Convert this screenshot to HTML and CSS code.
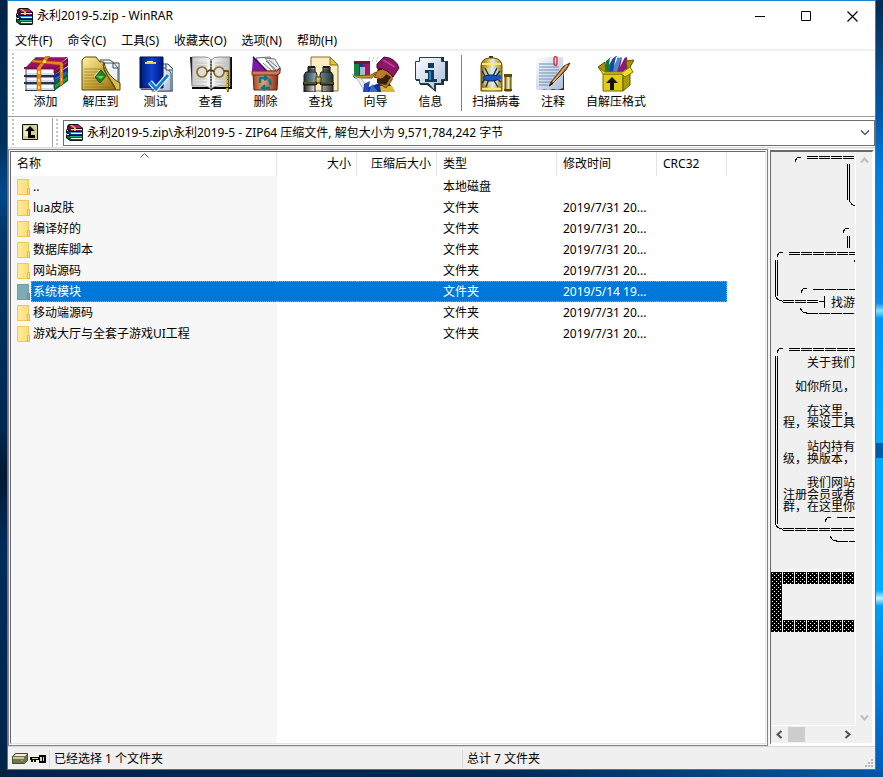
FILE: index.html
```html
<!DOCTYPE html>
<html lang="zh-CN">
<head>
<meta charset="utf-8">
<title>永利2019-5.zip - WinRAR</title>
<link rel="stylesheet" href="styles.css">
</head>
<body>
<svg class="defs" aria-hidden="true">
  <defs>
    <linearGradient id="gold" x1="0" y1="0" x2="1" y2="1"><stop offset="0" stop-color="#fff4a8"/><stop offset=".5" stop-color="#d2b246"/><stop offset="1" stop-color="#8a6a10"/></linearGradient>
    <linearGradient id="goldbar" x1="0" x2="1"><stop offset="0" stop-color="#8a6a00"/><stop offset=".35" stop-color="#e0c050"/><stop offset=".55" stop-color="#d8f0f0"/><stop offset="1" stop-color="#a88400"/></linearGradient>
    <linearGradient id="blue" x1="0" x2="1"><stop offset="0" stop-color="#001a78"/><stop offset=".5" stop-color="#0c44cc"/><stop offset="1" stop-color="#001888"/></linearGradient>
    <linearGradient id="paper" x1="0" y1="0" x2="1" y2="1"><stop offset="0" stop-color="#ffffff"/><stop offset="1" stop-color="#a8bcd8"/></linearGradient>
    <linearGradient id="page" x1="0" x2="1"><stop offset="0" stop-color="#c8c8c8"/><stop offset=".5" stop-color="#f8f8f8"/><stop offset="1" stop-color="#bdbdbd"/></linearGradient>
    <linearGradient id="bin" x1="0" x2="1"><stop offset="0" stop-color="#a84420"/><stop offset=".4" stop-color="#e8a080"/><stop offset="1" stop-color="#8c2c10"/></linearGradient>
    <linearGradient id="tube" x1="0" x2="1"><stop offset="0" stop-color="#203438"/><stop offset=".4" stop-color="#88a4a8"/><stop offset="1" stop-color="#203438"/></linearGradient>
    <linearGradient id="steel" x1="0" x2="1"><stop offset="0" stop-color="#222"/><stop offset=".4" stop-color="#eee"/><stop offset="1" stop-color="#333"/></linearGradient>
    <linearGradient id="folder" x1="0" x2="1"><stop offset="0" stop-color="#ffeb9c"/><stop offset="1" stop-color="#fbdc74"/></linearGradient>
    <pattern id="shade" width="4" height="4" patternUnits="userSpaceOnUse"><path fill="#000" d="M0 0h4v4H0z"/><path fill="#fff" d="M1 1h1v1H1zM3 3h1v1H3z"/></pattern>
    <symbol id="books" viewBox="0 0 17 17">
      <path fill="#111" d="M1 2l2-2h9l5 4v12l-1 1H4l-4-3v-3l1-1-1-1V6l1-1z"/>
      <path fill="#b0207c" d="M3 1h9l4 3H5z"/><path fill="#7c0a50" d="M2 2l3 3h11v2H5L1 4z"/><path fill="#f4f4f4" d="M5 5h11v1H5z"/><path fill="#f0c818" d="M4 1h2l4 3v3H8V4z"/>
      <path fill="#0a3080" d="M1 7l4 1h11v3H5L1 9z"/><path fill="#3c8ce0" d="M4 8h12v1H4z"/><path fill="#f4f4f4" d="M5 9h11v1H5z"/>
      <path fill="#06603a" d="M1 11l4 2h11v3H5l-4-2z"/><path fill="#20b870" d="M4 12h12v1H4z"/><path fill="#f4f4f4" d="M5 14h11v1H5zM1 6h1v1H1zM1 10h2v1H1z"/>
    </symbol>
    <symbol id="dir" viewBox="0 0 13 16"><path fill="url(#folder)" stroke="#eec94f" d="M.5.5h11v9h1v6H.5z"/><path fill="#ffe28a" stroke="#e2b93c" d="M10.500 9.500h2v6h-2z"/></symbol>
  </defs>
</svg>
<main class="window">
  <header class="titlebar">
    <svg class="app-icon"><use href="#books"/></svg>
    <h1>永利2019-5.zip - WinRAR</h1>
    <button class="caption" aria-label="最小化"><svg width="11" height="11"><path d="M0 5.500h10" stroke="#000"/></svg></button>
    <button class="caption" aria-label="最大化"><svg width="11" height="11"><path d="M.5.5h9v9h-9z" fill="none" stroke="#000"/></svg></button>
    <button class="caption" aria-label="关闭"><svg width="11" height="11"><path d="M.5.5l10 10m0-10l-10 10" stroke="#000" stroke-width="1.200"/></svg></button>
  </header>
  <nav class="menu">
    <button>文件(F)</button><button>命令(C)</button><button>工具(S)</button><button>收藏夹(O)</button><button>选项(N)</button><button>帮助(H)</button>
  </nav>
  <div class="toolbar">
    <span class="grip"></span>
    <button class="tool"><svg width="44" height="36" viewBox="0 0 44 36">
      <path fill="#063" d="M30 26l14-9v8L30 35z"/><path fill="#18a050" d="M31 29l12-8v3l-12 8z"/><path fill="#0a2c90" d="M30 19l14-8v6l-14 9z"/><path fill="#2468d8" d="M31 22l12-7v2l-12 7z"/><path fill="#700848" d="M30 12L44 2v8l-14 9z"/><path fill="#b43088" d="M31 14L43 5v2l-12 8z"/>
      <path fill="#981068" d="M12 1h32L31 12H1z"/><path fill="#c83898" d="M13 1h29l-2 1H11z"/>
      <path fill="#fff" stroke="#445" d="M2 13h28v6H2zM2 21h28v5H2zM2 28h28v6H2z"/><path fill="#d4dce8" d="M3 17h27v2H3zM3 24h27v2H3zM3 32h27v2H3z"/>
      <path fill="#801050" d="M0 11h31v2H0z"/><path fill="#222c60" d="M0 19h31v2H0z"/><path fill="#203850" d="M0 26h31v2H0zM1 34h30v1H1z"/>
      <path fill="#e88820" stroke="#a85808" stroke-width=".5" d="M22 0h4l-9 12v23h-4V12zM9 4l29 2 1 2v20l-3 2V9L7 6z"/><path fill="#ffe04a" d="M19 4h3v3h-3zM14 15h2v3h-2zM14 23h2v3h-2zM14 30h2v3h-2zM37 13h1v3h-1zM37 22h1v3h-1z"/>
    </svg>添加</button>
    <button class="tool"><svg width="40" height="36" viewBox="0 0 40 36">
      <path fill="#fff" stroke="#345" d="M19 4h10l4 3h5v20H19z"/><path fill="#eef4fa" stroke="#456" d="M23 7h10l4 5v17H23z"/><path fill="none" stroke="#345" d="M32 7v5h5"/>
      <path fill="url(#gold)" stroke="#5c4400" d="M1 8V4l3-3h11l4 5h4v8l12 20H1z"/><path fill="#dcbc50" stroke="#503c00" d="M23 7c3 11 9 16 16 20v7h-4C32 25 26 22 22 9z"/>
      <path stroke="#927418" opacity=".7" d="M3 13h19M3 16h17M3 19h14M3 22h12M3 25h14M3 28h20M3 31h27"/><path fill="#e9f7dd" d="M19 14v12l-6-6z"/><path fill="#228624" stroke="#145014" d="M20 14l5 6-6 7-5-6z"/><path fill="#70cb58" d="M15 20h8l-3 3z"/>
    </svg>解压到</button>
    <button class="tool"><svg width="34" height="36" viewBox="0 0 34 36">
      <path fill="url(#paper)" stroke="#345" d="M23 8h6l5 5v22H15V8z"/><path fill="url(#paper)" stroke="#456" d="M20 12h8l4 5v18H13V12z"/><path fill="#fff" stroke="#345" d="M27 8v6h6"/><path fill="url(#blue)" stroke="#00104c" d="M1 1h23v31H1z"/><path fill="#00145c" d="M1 1h2v31H1z"/><path fill="#e4cf42" d="M6 6h11v2H6z"/><path fill="#fff3a0" d="M8 5h6v1H8z"/><path fill="none" stroke="#fff" stroke-width="5" d="M11 26l6 7 12-14"/><path fill="none" stroke="#0880dc" stroke-width="3" d="M11 26l6 7 12-14"/><path fill="#2060a8" d="M2 33h13v1H2z"/>
    </svg>测试</button>
    <button class="tool"><svg width="42" height="36" viewBox="0 0 42 36">
      <path fill="#080808" d="M0 1h2v32h18l1 2 2-2h19V1h-2v30H2z"/><path fill="url(#page)" stroke="#666" stroke-width=".7" d="M2 1h13q4 0 6 3v29q-3-3-7-3H2zM21 4q3-3 7-3h12v29H28q-4 0-7 3z"/><path stroke="#222" stroke-dasharray="2 1" d="M21 5v27"/>
      <g stroke="#bbb" stroke-width=".8"><path d="M5 7h12M5 10h12M5 23h12M5 26h12M25 7h12M25 10h12M25 23h12M25 26h12"/></g><circle cx="12" cy="16" r="5" fill="#ddd" stroke="#8b6b22" stroke-width="1.700"/><circle cx="29" cy="16" r="5" fill="#ddd" stroke="#8b6b22" stroke-width="1.700"/><path fill="none" stroke="#44300a" stroke-width="1.500" d="M17 16q4-4 7 0M34 15h4v21"/><path stroke="#d7af2a" stroke-width="2" d="M37 16v18" stroke-dasharray="3 1"/>
    </svg>查看</button>
    <button class="tool"><svg width="30" height="36" viewBox="0 0 30 36">
      <path fill="#fff" stroke="#666" d="M5 2l14-1 10 10v4H12z"/><path fill="#e7e7ef" stroke="#777" d="M14 2l10 1 5 9-5 3z"/><path stroke="#777" d="M15 5l10 9M18 4l8 7M12 7l9 8"/><path fill="#7a18aa" d="M2 0l14 15H1z"/><path stroke="#40085c" stroke-width="1.500" d="M2 1l14 14"/><path fill="url(#bin)" stroke="#602010" d="M2 18h25l-1 16H3z"/><path fill="#ce7d58" stroke="#742a10" d="M1 15h25l3-3v5l-3 2H1z"/><path fill="none" stroke="#087888" stroke-width="2.400" d="M9 27v-5h6m-2-3 3 3-3 2m5-1 2 6m-1 3h-7m2-3-3 3 3 2"/>
    </svg>删除</button>
    <button class="tool"><svg width="36" height="36" viewBox="0 0 36 36">
      <path fill="#faedc0" stroke="#7e6d3c" d="M8 1h19l8 8v26H8z"/><path fill="#e7c631" stroke="#7e6d20" d="M27 1v8h8z"/><path fill="url(#steel)" stroke="#111" d="M5 11h7v7H5zM20 11h7v7h-7z"/><path stroke="#222" d="M5 14h7M20 14h7"/><path fill="#151e20" d="M5 10h7v2H5zM20 10h7v2h-7z"/><path fill="url(#tube)" stroke="#101a1c" d="M3 16h10l1 3v9H1v-9zM18 16h10l2 3v9H17v-9z"/><path fill="url(#gold)" stroke="#443000" d="M13 21h5v6h-5z"/><path fill="url(#steel)" stroke="#111" d="M1 29h11v7H1zM19 29h11v7H19z"/><path fill="#151c1c" d="M0 26h14v3H0zM17 26h14v3H17z"/><path stroke="#9f8728" d="M1 27h12M18 27h12"/>
    </svg>查找</button>
    <button class="tool"><svg width="48" height="36" viewBox="0 0 48 36">
      <path fill="#142d9c" d="M17 31l13-5 8 2 5 8H11z"/><path fill="#4268cc" d="M17 36l3-8 6 8z"/><path fill="#d8b82c" d="M28 30h12l3 6H29z"/><path fill="#bd782a" stroke="#6e3d0d" d="M26 9l15 6-1 9-6 8-9-6 3-3-6-2 4-7z"/><path fill="#38210b" d="M25 23q7 0 9-5l5 3-5 8-9-2z"/><path fill="#8c1865" stroke="#430b33" d="M25 8l7-7q12 1 15 11l-6 9q-5-8-16-9z"/><path stroke="#bd3b92" stroke-width="2" d="M31 4l12 7"/><path stroke="#321" stroke-width="1.500" d="M26 14l4-1"/>
      <path fill="#148344" d="M2 5h6v15H2z"/><path fill="#0d3c98" d="M7 5h4v16H7z"/><path fill="#a01768" d="M11 5h7v16h-7z"/><path fill="#6f143b" d="M2 5h16v3H2z"/><path fill="#dff0f0" d="M8 11h5v10H8z" opacity=".7"/><path fill="#c99b2b" stroke="#7b5210" d="M1 20l18-1 5-3-4 6H3z"/><path fill="#e9eef4" stroke="#8794a4" stroke-width=".6" d="M0 18q5 5 9 4l7 10-4 3-6-11z"/><path fill="#2348b4" d="M12 28l6-3-2 11h-5z"/><path stroke="#a0a0a0" stroke-dasharray="1 3" d="M17 2h10M20 5h6"/>
    </svg>向导</button>
    <button class="tool"><svg width="34" height="36" viewBox="0 0 34 36">
      <path fill="#18333c" d="M7 1h23v4h4v20h-4v4H22v7l-9-7H6v-4H2V5h5z"/><path fill="url(#paper)" stroke="#263c46" d="M5.500 1.500h22v4h4v18h-4v4h-7v7l-6-7h-9v-4h-4v-18h4z"/><path fill="#123b58" d="M14 7h6v5h-6zM11 14h9v9h3v3H11v-3h3v-6h-3z"/><path fill="#1d88bd" d="M15 15h2v9h-2z"/>
    </svg>信息</button>
    <span class="tool-sep"></span>
    <button class="tool scan"><svg width="32" height="36" viewBox="0 0 32 36">
      <path fill="#443600" d="M9 0h4v4H9z"/><path fill="url(#goldbar)" stroke="#664e00" d="M1 10q0-7 8-8h5q8 1 8 8v25H1z"/><path fill="#ffe774" d="M2 7h19v2H2zM2 32h19v2H2z"/><path fill="#cce8e8" d="M4 12h14v17H4z" opacity=".5"/><path fill="none" stroke="#10226a" stroke-width="1.300" d="M5 20l-3-5m7 5-4-8m8 8 4-8m-1 8 4-5M5 23l-3 4m7-4-3 8m7-8 5 8m-2-9 5 4"/><ellipse cx="11" cy="22" rx="8" ry="3" fill="#1854bd" stroke="#0b2159"/><circle cx="19" cy="21" r="2.500" fill="#1854bd"/><path fill="url(#goldbar)" stroke="#564200" d="M25 20h6v15h-6z"/><path fill="#604800" d="M24 18h8v3h-8zM24 33h8v2h-8z"/>
    </svg>扫描病毒</button>
    <button class="tool note"><svg width="36" height="36" viewBox="0 0 36 36">
      <path fill="#222e3b" d="M4 34h25V12l-2 19z"/><path fill="url(#paper)" d="M1 1h27v31q-5 3-10 1-5 2-9 0-5 2-8 0z"/><path stroke="#6d8cb5" d="M4 8h18M4 11h20M4 14h20M4 17h18M4 20h16M4 23h13M4 26h12M4 29h9"/><path fill="none" stroke="#d33c48" stroke-width="1.500" d="M19 2v6q2 3 3 0V2q-2-3-3 0"/><path fill="#9c6024" stroke="#5b3010" d="M35 7l-4 7-15 15-2 1 2-4L29 10z"/><path stroke="#ddb36a" stroke-width="1.500" d="M32 9L18 26"/><path fill="#111" d="M14 30l3-4 1 2z"/>
    </svg>注释</button>
    <button class="tool sfx"><svg width="36" height="36" viewBox="0 0 36 36">
      <path fill="#147847" d="M8 5l5-4 3 2-3 14H7z"/><path fill="#1e44a6" d="M13 4l5-4 3 2-5 16h-5z"/><path fill="#4a8ad0" d="M17 4l6-3 2 2-6 14h-4z"/><path fill="#8c1878" d="M23 3l6-2 1 11-7 5-4-1z"/><path fill="#fff" d="M12 2l2-1 1 1-4 7zM18 1l2 0-4 9zM24 2l3-1-5 10z"/><path fill="#a89000" stroke="#5f5200" d="M0 11l7-5 1 10-2 2zM29 12l-1-7 8-1-5 9z"/><path fill="#dfcf12" stroke="#786b00" d="M5 18h20v17H5z"/><path fill="#aa9c08" stroke="#625800" d="M25 18l7-6v17l-7 6z"/><path fill="#efdf22" stroke="#807200" d="M1 12l6 4h18l7-5 3 5-8 5-3-3H5z"/><path fill="#161200" d="M14 21l6 6h-4v7h-4v-7H8z"/>
    </svg>自解压格式</button>
  </div>
  <div class="address">
    <span class="grip"></span>
    <button class="up" aria-label="上一级"><svg width="16" height="16"><path fill="#d4cd96" stroke="#111" d="M.5.5h15v15H.5z"/><path fill="#eee9bd" d="M2 2h6v10H2z"/><path fill="#000" d="M8 2l5 5H9v4h4v3H6V7H3z"/></svg></button>
    <span class="grip second"></span>
    <div class="combo">
      <svg class="app-icon"><use href="#books"/></svg>
      <select aria-label="路径"><option>永利2019-5.zip\永利2019-5 - ZIP64 压缩文件, 解包大小为 9,571,784,242 字节</option></select>
      <svg class="chevron" width="10" height="6"><path d="M1 .5l4 4 4-4" fill="none" stroke="#444" stroke-width="1.200"/></svg>
    </div>
  </div>
  <div class="panes">
    <section class="pane list"><div class="inner">
      <svg class="sort" width="9" height="5"><path d="M.5 4.500l4-4 4 4" fill="none" stroke="#555"/></svg>
      <table>
        <colgroup><col class="c-name"><col class="c-size"><col class="c-size"><col class="c-type"><col class="c-date"><col class="c-crc"></colgroup>
        <thead><tr><th>名称</th><th class="num">大小</th><th class="num">压缩后大小</th><th>类型</th><th>修改时间</th><th>CRC32</th></tr></thead>
        <tbody>
          <tr><td><div class="name"><svg><use href="#dir"/></svg><span>..</span></div></td><td></td><td></td><td>本地磁盘</td><td></td><td></td></tr>
          <tr><td><div class="name"><svg><use href="#dir"/></svg><span>lua皮肤</span></div></td><td></td><td></td><td>文件夹</td><td>2019/7/31 20...</td><td></td></tr>
          <tr><td><div class="name"><svg><use href="#dir"/></svg><span>编译好的</span></div></td><td></td><td></td><td>文件夹</td><td>2019/7/31 20...</td><td></td></tr>
          <tr><td><div class="name"><svg><use href="#dir"/></svg><span>数据库脚本</span></div></td><td></td><td></td><td>文件夹</td><td>2019/7/31 20...</td><td></td></tr>
          <tr><td><div class="name"><svg><use href="#dir"/></svg><span>网站源码</span></div></td><td></td><td></td><td>文件夹</td><td>2019/7/31 20...</td><td></td></tr>
          <tr class="selected"><td><div class="name"><svg viewBox="0 0 13 16"><path fill="#7eabb5" stroke="#6fa09a" d="M.5.5h11v9h1v6H.5z"/><path fill="#7eabb5" stroke="#639488" d="M10.500 9.500h2v6h-2z"/></svg><span>系统模块</span></div></td><td></td><td></td><td>文件夹</td><td>2019/5/14 19...</td><td></td></tr>
          <tr><td><div class="name"><svg><use href="#dir"/></svg><span>移动端源码</span></div></td><td></td><td></td><td>文件夹</td><td>2019/7/31 20...</td><td></td></tr>
          <tr><td><div class="name"><svg><use href="#dir"/></svg><span>游戏大厅与全套子游戏UI工程</span></div></td><td></td><td></td><td>文件夹</td><td>2019/7/31 20...</td><td></td></tr>
        </tbody>
      </table>
    </div></section>
    <section class="pane comment"><div class="inner">
      <div class="text">
        <svg class="art" width="84" height="500" fill="none" stroke="#000" shape-rendering="crispEdges">
          <g stroke-dasharray="11 1">
            <path d="M36 4.500h48M36 6.500h48M18 100.500h66M18 102.500h66M12 148.500h36M12 150.500h36M42 137.500h42M36 161.500h48M18 196.500h66M18 198.500h66M12 376.500h72M12 378.500h72M66 365.500h18M66 389.500h18"/>
          </g>
          <path d="M76.500 12v36M78.500 12v36M76.500 84v12M78.500 84v12M4.500 108v36M6.500 108v36M4.500 204v168M6.500 204v168M48 149.500h6M53.500 144v12M83.500 108v2"/>
          <path d="M24.500 10q0-5 5-5M78.500 48q1 5 6 6M72.500 81q0-5 5-5M6.500 105q0-5 5-5M4.500 144q2 5 7 5M30.500 141q0-5 5-5M29.500 156q1 5 6 5M6.500 201q0-5 5-5M4.500 372q2 5 7 5M54.500 370q0-5 5-5M59.500 384q1 5 6 5"/>
          <g stroke="none" fill="url(#shade)"><path d="M0 420h11v60H0zM12 420h11v12H12zM24 420h11v12H24zM36 420h11v12H36zM48 420h11v12H48zM60 420h11v12H60zM72 420h11v12H72zM12 468h11v12H12zM24 468h11v12H24zM36 468h11v12H36zM48 468h11v12H48zM60 468h11v12H60zM72 468h11v12H72z"/></g>
        </svg>
<pre>












　　　　　找游




　　　关于我们

　　如你所见，

　　　在这里，
　程，架设工具

　　　站内持有
　级，换版本，

　　　我们网站
　注册会员或者
　群，在这里你</pre>
      </div>
      <div class="vbar"><svg width="9" height="7"><path d="M1 5.500l3.500-4 3.500 4" fill="none" stroke="#bfbfbf" stroke-width="2"/></svg><svg width="9" height="7"><path d="M1 1.500l3.500 4 3.500-4" fill="none" stroke="#bfbfbf" stroke-width="2"/></svg></div>
      <div class="hbar"><svg width="7" height="9"><path d="M5.500 1l-4 3.500 4 3.500" fill="none" stroke="#505050" stroke-width="2"/></svg><span class="thumb"></span><svg width="7" height="9"><path d="M1.500 1l4 3.500-4 3.500" fill="none" stroke="#505050" stroke-width="2"/></svg></div>
    </div></section>
  </div>
  <footer class="status">
    <svg width="16" height="12"><path fill="#77744a" stroke="#4b4a2c" d="M.5 3.500l3-3h12v7l-3 3H.5z"/><path fill="#c8c69c" d="M1 4h11v2H1z"/><path fill="#efefd8" d="M4 1h11l-2 2H2z"/><path fill="#35d0a0" d="M9 7h2v1H9z"/></svg>
    <svg class="key" width="16" height="8"><path fill="#000" d="M0 2h9V0h7v8H9V5H6v2H4V5H3v2H1V5H0z"/><path fill="#ddd69c" d="M10 2h2v4h-2zM13 2h1v4h-1zM2 3h6v1H2z"/></svg>
    <p class="cell">已经选择 1 个文件夹</p>
    <p class="cell">总计 7 文件夹</p>
    <svg class="resize" width="8" height="8"><path fill="#b8b8b8" d="M6 0h2v2H6zM3 3h2v2H3zM6 3h2v2H6zM0 6h2v2H0zM3 6h2v2H3zM6 6h2v2H6z"/></svg>
  </footer>
</main>
</body>
</html>
```
FILE: styles.css
```css
* { box-sizing: border-box; }
body {
  margin: 0;
  padding: 0 7px 7px;
  height: 100vh;
  font: 12px/18px "Noto Sans", "Noto Sans CJK SC", sans-serif;
  color: #000;
  background:
    linear-gradient(90deg, #01234a, #01284f 55%, #0058a8) bottom / 100% 7px no-repeat,
    linear-gradient(#002347, #00305a 18%, #00498a 25%, #003566 30%, #002850 55%, #001833 61%, #002c58 70%, #01234a) left / 7px 100% no-repeat,
    linear-gradient(#06284f, #0a4a88 9%, #0059ab 15%, #007ee0 22%, #0a8cec 39%, #8fdcff 40%, #0096f4 41%, #00aaff 56%, #00aaff 57%, #005aa8 57%, #005aa8 59%, #00a8ff 59%, #00adff 76%, #c4f2ff 77%, #00a0f4 78%, #0078dc 90%, #005cb4) right / 7px 100% no-repeat;
}
h1, p, pre { margin: 0; font-size: inherit; font-weight: normal; }
button, select { font: inherit; color: inherit; background: none; border: 0; padding: 0; margin: 0; }
svg { display: block; flex: none; }
.defs { position: absolute; width: 0; height: 0; }

.window { height: 100%; display: flex; flex-direction: column; background: #f0f0f0; border: 1px solid #1883d7; }
.titlebar { display: flex; align-items: center; height: 30px; padding-left: 8px; background: #fff; }
.titlebar h1 { flex: 1; padding-left: 4px; }
.app-icon { width: 17px; height: 17px; }
.caption { width: 46px; height: 29px; display: grid; place-items: center; }
.menu { display: flex; gap: 15px; height: 20px; padding: 1px 0 0 7px; background: #fff; border-bottom: 2px solid #f0f0f0; }
.menu button { height: 18px; }

.toolbar { display: flex; height: 66px; padding-left: 4px; background: #fff; border-bottom: 1px solid #a0a0a0; }
.grip { width: 2px; margin: 2px 0; background: repeating-linear-gradient(#c4c4c4 0 2px, #fff 2px 4px); }
.tool { display: flex; flex-direction: column; align-items: center; gap: 1px; width: 55px; padding-top: 5px; white-space: nowrap; }
.grip + .tool { margin-left: 4px; }
.tool-sep { width: 1px; margin: 4px 3px 5px; background: #808080; }
.tool.scan { width: 62px; }
.tool.note { width: 52px; }
.tool.sfx { width: 74px; }

.address { display: flex; align-items: center; height: 31px; padding-left: 4px; background: #fff; border-bottom: 1px solid #d8d8d8; }
.address .grip { align-self: stretch; }
.up { width: 39px; height: 29px; padding-left: 8px; border-right: 1px solid #a0a0a0; display: flex; align-items: center; }
.grip.second { margin-left: 3px; }
.combo { flex: 1; display: flex; align-items: center; height: 26px; margin: 1px 0 0 5px; padding: 0 4px 0 2px; border: 1px solid #6e6e6e; background: #fff; }
.combo select { flex: 1; min-width: 0; appearance: none; padding-left: 4px; height: 20px; }

.panes { flex: 1; min-height: 0; display: flex; gap: 1px; padding-top: 1px; }
.pane { border: 1px solid #838391; padding: 1px; background: #f7f7f7; min-width: 0; }
.inner { height: 100%; border: 1px solid; border-color: #696969 #e3e3e3 #e3e3e3 #696969; overflow: hidden; }
.list { flex: 1; }
.list .inner { position: relative; background: linear-gradient(#fff 0 24px, #f7f7f7 24px) left / 266px 100% no-repeat, #fff; }
.sort { position: absolute; left: 129px; top: 1px; }
table { table-layout: fixed; width: 716px; border-collapse: separate; border-spacing: 0; }
.c-name { width: 266px; }
.c-size { width: 80px; }
.c-type { width: 120px; }
.c-date { width: 100px; }
.c-crc { width: 70px; }
th { height: 24px; padding: 0 5px 0 6px; text-align: left; font-weight: normal; border-right: 1px solid #e5e5e5; }
th.num { text-align: right; }
td { height: 21px; padding: 0 6px; white-space: nowrap; }
td:first-child { padding: 0 0 0 6px; }
.name { display: flex; align-items: center; }
.name svg { width: 13px; height: 16px; }
.name span { flex: 1; margin-left: 1px; padding-left: 2px; line-height: 21px; height: 21px; }
.selected { color: #fff; }
.selected td:not(:first-child), .selected .name span { background: #0078d7; border: 0 dotted #ff8728; border-width: 1px 0; line-height: 19px; }
.selected .name span { border-left-width: 1px; padding-left: 1px; }
.selected td:last-child { border-right-width: 1px; }

.comment { width: 106px; border-color: #fff; padding: 0; }
.comment .inner { display: grid; grid-template: 1fr 17px / 1fr 16px; border-width: 2px 2px 2px 1px; border-color: #696969 #fff #fff #696969; background: #f0f0f0; }
.text { position: relative; overflow: hidden; min-height: 0; border-right: 1px solid #fff; border-bottom: 1px solid #fff; }
.text pre { font: 12px/12px "Noto Sans CJK SC", sans-serif; }
.art { position: absolute; left: 0; top: 0; }
.vbar { display: flex; flex-direction: column; justify-content: space-between; align-items: center; padding: 5px 0; }
.hbar { display: flex; align-items: center; justify-content: space-between; padding: 0 5px; }
.thumb { width: 17px; height: 15px; margin-left: 5px; margin-right: auto; background: #cdcdcd; }

.status { position: relative; display: flex; align-items: center; height: 23px; padding: 1px 0 0 4px; border-top: 1px solid #d7d7d7; }
.status .key { margin-left: 2px; margin-right: 3px; }
.status .cell { flex: 1; padding-left: 4px; border-left: 1px solid #d7d7d7; }
.resize { position: absolute; right: 2px; bottom: 2px; }
```
